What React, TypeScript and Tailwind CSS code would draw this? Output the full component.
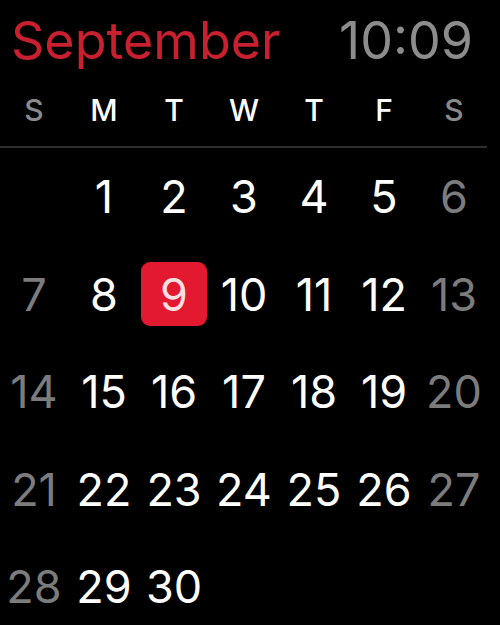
const weeks: (number | null)[][] = [
  [null, 1, 2, 3, 4, 5, 6],
  [7, 8, 9, 10, 11, 12, 13],
  [14, 15, 16, 17, 18, 19, 20],
  [21, 22, 23, 24, 25, 26, 27],
  [28, 29, 30, null, null, null, null],
];

const days = ['S', 'M', 'T', 'W', 'T', 'F', 'S'];

export default function App() {
  return (
    <div className="h-[625px] w-[500px] overflow-hidden bg-black font-['Inter',sans-serif]">
      {/* Header */}
      <div className="flex h-[82px] items-center justify-between pl-[11px] pr-[27px] text-[52px] leading-none">
        <span className="text-[#c8202e]">September</span>
        <span className="text-[#8c8c8c]">10:09</span>
      </div>

      {/* Weekdays */}
      <div className="-ml-[1px] grid h-[56px] w-[490px] grid-cols-7 items-center text-[30px] font-medium leading-none">
        {days.map((d, i) => (
          <div
            key={i}
            className={`text-center ${i === 0 || i === 6 ? 'text-[#8a8a8a]' : 'text-white'}`}
          >
            {d}
          </div>
        ))}
      </div>

      <div className="mt-[8px] h-[2px] w-[487px] bg-[#2e2e2e]" />

      {/* Dates */}
      <div className="-ml-[1px] w-[490px]">
        {weeks.map((week, r) => (
          <div key={r} className="grid h-[97.5px] grid-cols-7 items-center text-[45px] leading-none">
            {week.map((n, i) => (
              <div key={i} className="flex justify-center">
                {n === 9 ? (
                  <div className="flex h-[64px] w-[66px] items-center justify-center rounded-[9px] bg-[#e2192f] text-[#f7dfe2]">
                    {n}
                  </div>
                ) : (
                  <span className={i === 0 || i === 6 ? 'text-[#7c7c7c]' : 'text-white'}>{n}</span>
                )}
              </div>
            ))}
          </div>
        ))}
      </div>
    </div>
  );
}
